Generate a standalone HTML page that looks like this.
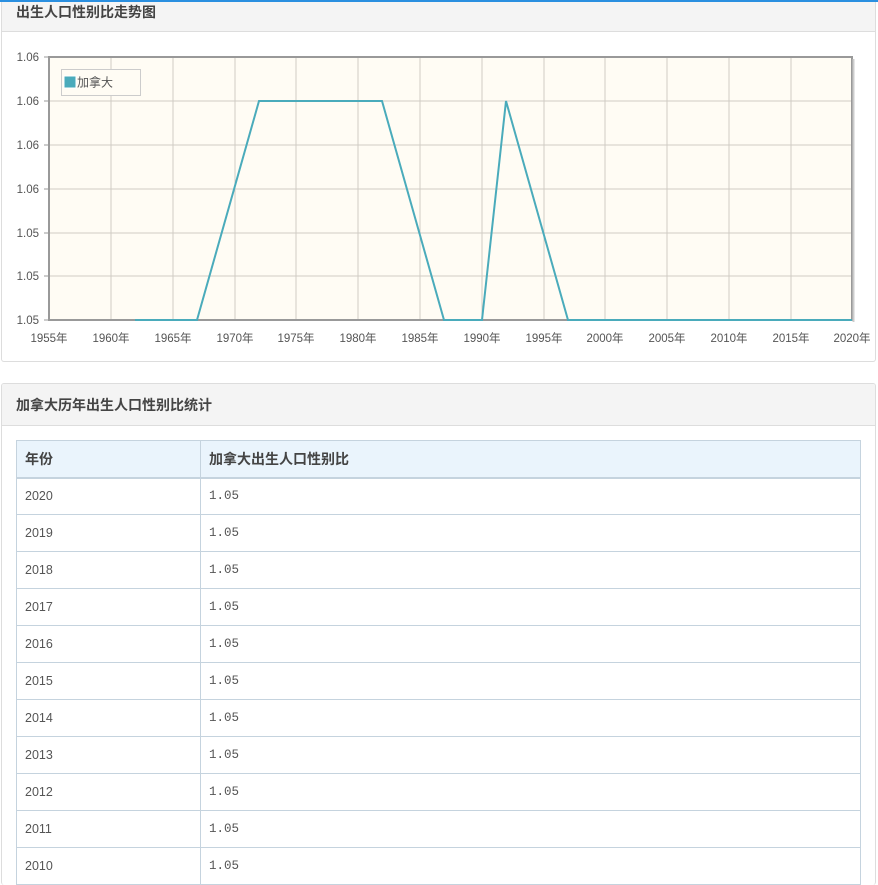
<!DOCTYPE html>
<html><head><meta charset="utf-8"><style>
*{margin:0;padding:0;box-sizing:border-box}
html{width:878px;height:885px;overflow:hidden}
body{width:878px;height:885px;overflow:hidden;background:#fff;font-family:"Liberation Sans","Noto Sans CJK SC",sans-serif;color:#555;position:relative}
.topbar{position:absolute;left:0;top:0;width:878px;height:2px;background:#2a8fe0;z-index:10}
.panel{position:absolute;left:1px;width:875px;border:1px solid #ddd;border-radius:3px;background:#fff;overflow:hidden}
.ph{height:32px;background:#f4f4f4;border-bottom:1px solid #ddd;font-size:14px;font-weight:bold;color:#444;padding-left:14px;line-height:26px}
table{position:absolute;left:14px;top:56px;width:845px;border-collapse:collapse;font-size:13px}
td,th{border:1px solid #c5d3de;height:37px;padding-left:8px;text-align:left}
th{background:#eaf4fc;font-weight:bold;color:#444;font-size:14px;border-bottom:2px solid #c5d3de}
td{font-family:"Liberation Mono","Noto Sans CJK SC",monospace;color:#555;font-size:12.5px}
td:first-child{font-family:"Liberation Sans",sans-serif}
</style></head><body>
<div class="topbar"></div>
<div class="panel" style="top:0;height:362px;border-top:none">
<div class="ph" style="height:32px;line-height:24px">出生人口性别比走势图</div>
</div>
<svg style="position:absolute;left:0;top:0" width="878" height="362" font-family="Liberation Sans, Noto Sans CJK SC, sans-serif" font-size="11.5" fill="#555">
<rect x="49" y="57" width="803" height="263" fill="#fffcf4"/>
<g stroke="#d0ccc4" stroke-width="1">
<line x1="111" y1="57" x2="111" y2="320"/><line x1="173" y1="57" x2="173" y2="320"/><line x1="235" y1="57" x2="235" y2="320"/><line x1="296" y1="57" x2="296" y2="320"/><line x1="358" y1="57" x2="358" y2="320"/><line x1="420" y1="57" x2="420" y2="320"/><line x1="482" y1="57" x2="482" y2="320"/><line x1="544" y1="57" x2="544" y2="320"/><line x1="605" y1="57" x2="605" y2="320"/><line x1="667" y1="57" x2="667" y2="320"/><line x1="729" y1="57" x2="729" y2="320"/><line x1="791" y1="57" x2="791" y2="320"/>
<line x1="49" y1="101" x2="852" y2="101"/><line x1="49" y1="145" x2="852" y2="145"/><line x1="49" y1="189" x2="852" y2="189"/><line x1="49" y1="233" x2="852" y2="233"/><line x1="49" y1="276" x2="852" y2="276"/>
</g>
<rect x="49" y="57" width="803" height="263" fill="none" stroke="#999" stroke-width="2"/>
<line x1="853.5" y1="59" x2="853.5" y2="322" stroke="#ccc" stroke-width="2"/>
<g stroke="#999"><line x1="44" y1="57" x2="49" y2="57"/><line x1="44" y1="101" x2="49" y2="101"/><line x1="44" y1="145" x2="49" y2="145"/><line x1="44" y1="189" x2="49" y2="189"/><line x1="44" y1="233" x2="49" y2="233"/><line x1="44" y1="276" x2="49" y2="276"/><line x1="44" y1="320" x2="49" y2="320"/></g>
<polyline points="135,320 197,320 259,101 382,101 444,320 482,320 506,101 568,320 852,320" fill="none" stroke="#4aabbb" stroke-width="2"/>
<rect x="61.5" y="69.5" width="79" height="26" fill="#fffcf4" stroke="#ccc"/>
<rect x="64" y="76" width="12" height="12" fill="#4aabbb" stroke="#fff"/>
<text x="77" y="86.5" font-size="12">加拿大</text>
<g text-anchor="end"><text x="39" y="61">1.06</text><text x="39" y="105">1.06</text><text x="39" y="149">1.06</text><text x="39" y="193">1.06</text><text x="39" y="237">1.05</text><text x="39" y="280">1.05</text><text x="39" y="324">1.05</text></g>
<g text-anchor="middle"><text x="49" y="342">1955年</text><text x="111" y="342">1960年</text><text x="173" y="342">1965年</text><text x="235" y="342">1970年</text><text x="296" y="342">1975年</text><text x="358" y="342">1980年</text><text x="420" y="342">1985年</text><text x="482" y="342">1990年</text><text x="544" y="342">1995年</text><text x="605" y="342">2000年</text><text x="667" y="342">2005年</text><text x="729" y="342">2010年</text><text x="791" y="342">2015年</text><text x="852" y="342">2020年</text></g>
</svg>
<div class="panel" style="top:383px;height:502px;border-bottom:none">
<div class="ph" style="height:42px;line-height:42px">加拿大历年出生人口性别比统计</div>
<table>
<tr><th style="width:184px">年份</th><th>加拿大出生人口性别比</th></tr>
<tr><td>2020</td><td>1.05</td></tr>
<tr><td>2019</td><td>1.05</td></tr>
<tr><td>2018</td><td>1.05</td></tr>
<tr><td>2017</td><td>1.05</td></tr>
<tr><td>2016</td><td>1.05</td></tr>
<tr><td>2015</td><td>1.05</td></tr>
<tr><td>2014</td><td>1.05</td></tr>
<tr><td>2013</td><td>1.05</td></tr>
<tr><td>2012</td><td>1.05</td></tr>
<tr><td>2011</td><td>1.05</td></tr>
<tr><td>2010</td><td>1.05</td></tr>
</table>
</div>
</body></html>
